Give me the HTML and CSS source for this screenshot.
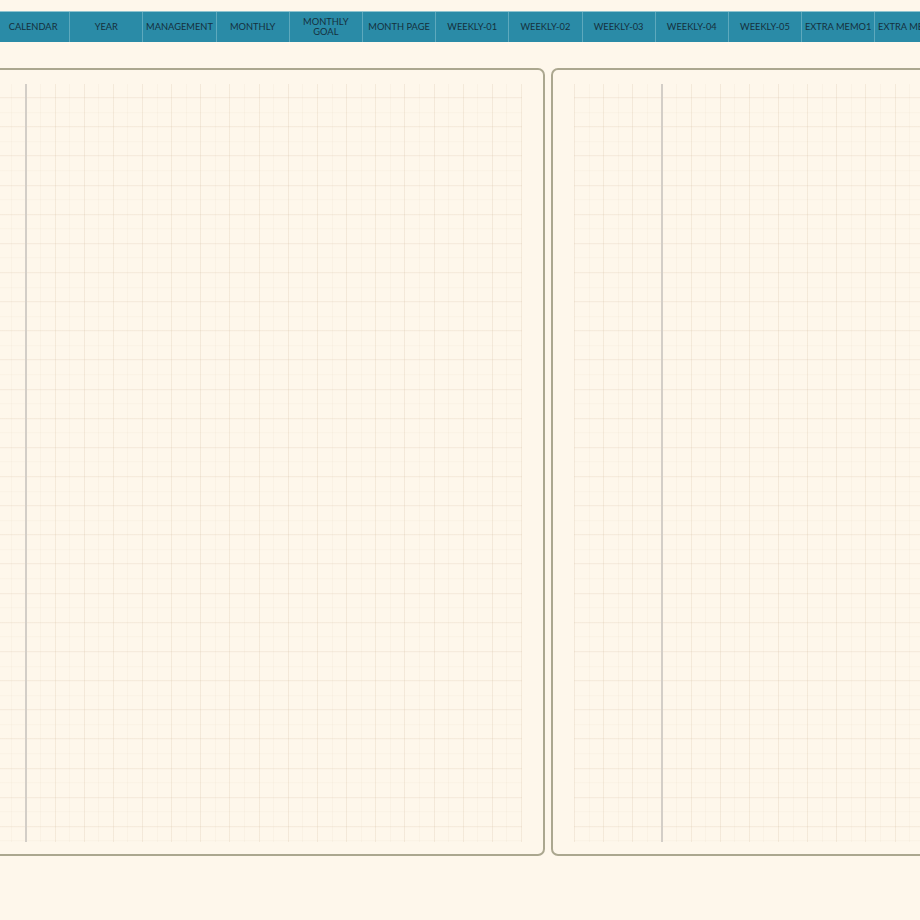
FILE: index.html
```html
<!DOCTYPE html>
<html lang="en">
<head>
    <meta charset="UTF-8">
    <meta name="viewport" content="width=device-width, initial-scale=1.0">
    <title>Planner</title>
    <link rel="stylesheet" href="styles.css">
</head>
<body>

    <nav class="tabs">
        <a class="tab">CALENDAR</a>
        <a class="tab">YEAR</a>
        <a class="tab">MANAGEMENT</a>
        <a class="tab">MONTHLY</a>
        <a class="tab">MONTHLY<br>GOAL</a>
        <a class="tab">MONTH PAGE</a>
        <a class="tab">WEEKLY-01</a>
        <a class="tab">WEEKLY-02</a>
        <a class="tab">WEEKLY-03</a>
        <a class="tab">WEEKLY-04</a>
        <a class="tab">WEEKLY-05</a>
        <a class="tab">EXTRA MEMO1</a>
        <a class="tab">EXTRA MEMO2</a>
    </nav>

    <div class="spread">
        <div class="page">
            <div class="grid">
                <div class="margin-line"></div>
            </div>
        </div>
        <div class="page">
            <div class="grid">
                <div class="margin-line"></div>
            </div>
        </div>
    </div>

</body>
</html>
```

FILE: styles.css
```css
body {
    margin: 0;
    background: #fef7eb;
    font-family: 'Lato', 'Liberation Sans', sans-serif;
    overflow: hidden;
    height: 920px;
}
.tabs {
    display: flex;
    margin: 11px 0 0 -3px;
    height: 30px;
    background: #2a8ba7;
    border-top: 1px solid #8fc4d0;
    overflow: hidden;
}
.tab {
    flex: 0 0 72.2px;
    border-right: 1px solid #5ea9bd;
    display: flex;
    align-items: center;
    justify-content: center;
    text-align: center;
    font-size: 9.3px;
    line-height: 10px;
    color: #15303d;
    white-space: nowrap;
    cursor: pointer;
}
.spread {
    display: flex;
    gap: 6px;
    margin: 26px 0 0 -85px;
}
.page {
    flex: 0 0 auto;
    width: 584px;
    height: 758px;
    padding: 14px 21px 12px 21px;
    border: 2px solid #aba78f;
    border-radius: 7px;
    background: #fef7eb;
}
.grid {
    height: 100%;
    background-color: #fef7eb;
    background-image:
        repeating-linear-gradient(90deg, rgba(205, 180, 150, 0.14) 0 1px, transparent 1px 29.15px),
        repeating-linear-gradient(0deg, rgba(205, 180, 150, 0.14) 0 1px, transparent 1px 29.15px),
        repeating-linear-gradient(90deg, rgba(205, 180, 150, 0.08) 0 1px, transparent 1px 14.575px),
        repeating-linear-gradient(0deg, rgba(205, 180, 150, 0.08) 0 1px, transparent 1px 14.575px);
    background-position: 0 0, 0 14.2px, 0 0, 0 14.2px;
}
.margin-line {
    margin-left: 87px;
    width: 2px;
    height: 100%;
    background: #d3cec7;
}
```
